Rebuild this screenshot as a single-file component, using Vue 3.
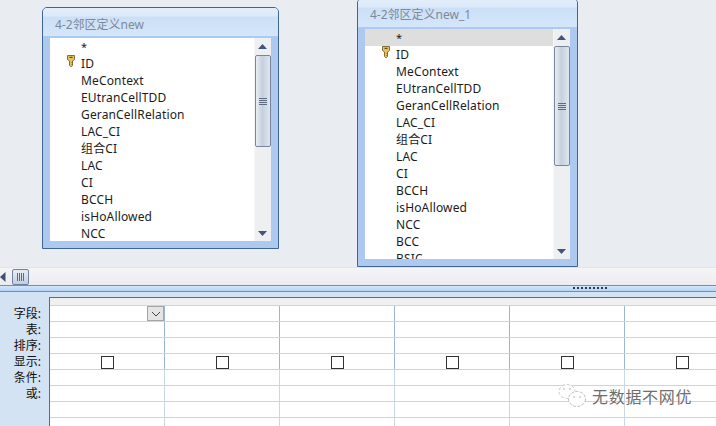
<script setup>
const fields = ['ID', 'MeContext', 'EUtranCellTDD', 'GeranCellRelation', 'LAC_CI', '组合CI', 'LAC', 'CI', 'BCCH', 'isHoAllowed', 'NCC', 'BCC', 'BSIC']
const tables = [
  { key: 'a', title: '4-2邻区定义new', rows: fields.slice(0, 11), selected: false },
  { key: 'b', title: '4-2邻区定义new_1', rows: fields, selected: true }
]
const labels = ['字段:', '表:', '排序:', '显示:', '条件:', '或:', '', '']
const columns = [0, 1, 2, 3, 4, 5]
const gridRows = ['field', 'table', 'sort', 'show', 'cond', 'or', 'blank', 'blank2']
</script>

<template>
  <div class="app">
    <section class="canvas">
      <article v-for="t in tables" :key="t.key" class="win" :class="'win-' + t.key">
        <header class="title">{{ t.title }}</header>
        <div class="body">
          <ul class="list">
            <li class="row star" :class="{ sel: t.selected }">*</li>
            <li v-for="(r, i) in t.rows" :key="r" class="row">
              <svg v-if="i === 0" class="key" width="8" height="12" viewBox="0 0 8 12">
                <path d="M.5.500h7v4l-2 1.500v4.500l-1 1h-1l-1-1v-4.500l-2-1.500z" fill="#e6c258" stroke="#75622a" stroke-width=".9"/>
                <rect x="2.500" y="1.800" width="3" height="1.200" fill="#5d4d1c"/>
                <path d="M4.500 7.500h1.500M4.500 9.500h1.500" stroke="#75622a" stroke-width=".9"/>
              </svg>
              {{ r }}
            </li>
          </ul>
          <div class="vbar">
            <svg class="arrow" width="17" height="16" viewBox="0 0 17 16"><path d="M4 11h9l-4.500-5z" fill="#44557c"/></svg>
            <div class="thumb"><span class="grip"></span></div>
            <div class="track"></div>
            <svg class="arrow" width="17" height="16" viewBox="0 0 17 16"><path d="M4 6h9l-4.500 5z" fill="#44557c"/></svg>
          </div>
        </div>
      </article>
    </section>

    <div class="hbar">
      <svg class="left" width="6" height="10" viewBox="0 0 6 10"><path d="M5.500 0v10l-5.500-5z" fill="#3f5275"/></svg>
      <div class="hthumb"><span class="hgrip"></span></div>
    </div>

    <div class="split"><span class="dots"></span></div>

    <section class="pane">
      <div class="labels">
        <div v-for="(l, i) in labels" :key="i" class="label">{{ l }}</div>
      </div>
      <div class="grid">
        <div class="heads">
          <div v-for="c in columns" :key="c" class="head"></div>
        </div>
        <div v-for="(r, ri) in gridRows" :key="r" class="grow">
          <div v-for="c in columns" :key="c" class="cell" :class="{ faint: ri > 3 }">
            <span v-if="r === 'field' && c === 0" class="combo">
              <svg width="10" height="6" viewBox="0 0 10 6"><path d="M1 1l4 4 4-4" fill="none" stroke="#444" stroke-width="1"/></svg>
            </span>
            <span v-if="r === 'show'" class="check"></span>
          </div>
        </div>
      </div>
      <div class="mark">
        <svg width="30" height="25" viewBox="0 0 30 25">
          <ellipse cx="9" cy="8.500" rx="8" ry="7" fill="#fff" fill-opacity=".85" stroke="#b5b5b5" stroke-width=".7" stroke-dasharray="3 2"/>
          <ellipse cx="19" cy="16" rx="8.500" ry="7.500" fill="#fff" fill-opacity=".95" stroke="#a0a0a0" stroke-width=".7" stroke-dasharray="3 1.500"/>
          <circle cx="6" cy="6" r=".8" fill="#aaa"/><circle cx="12" cy="6" r=".8" fill="#aaa"/>
          <circle cx="16" cy="14" r=".7" fill="#999"/><circle cx="22" cy="14" r=".7" fill="#999"/>
        </svg>
        <span class="mark-text">无数据不网优</span>
      </div>
    </section>
  </div>
</template>

<style scoped>
.app {
  position: relative;
  width: 716px;
  height: 426px;
  overflow: hidden;
  display: flex;
  flex-direction: column;
  font-family: "Noto Sans", "Noto Sans CJK SC", sans-serif;
  color: #1a1a1a;
  background: #e9edf1;
}
.canvas {
  position: relative;
  height: 267px;
  flex: none;
  background: #e9edf1;
  box-sizing: border-box;
  overflow: hidden;
}
.win {
  position: absolute;
  box-sizing: border-box;
  border: 1px solid #3f6593;
  border-radius: 5px 5px 0 0;
  background: #adc9ef;
  display: flex;
  flex-direction: column;
}
.win-a { left: 42px; top: 7px; width: 237px; height: 242px; }
.win-b { left: 357px; top: -2px; width: 221px; height: 269px; }
.title {
  height: 29px;
  flex: none;
  box-sizing: border-box;
  padding: 9px 0 0 12px;
  font-size: 12px;
  line-height: 16px;
  color: #7d8a98;
  border-radius: 4px 4px 0 0;
  border-bottom: 1px solid #a8cdf3;
  background: linear-gradient(#e4eefb 0, #dbe9fa 30%, #cbdff6 31%, #d5e6fa 100%);
}
.win-b .title { padding-top: 8px; }
.body {
  display: flex;
  margin: 1px 7px 7px 7px;
  height: 203px;
  background: #fff;
  overflow: hidden;
}
.win-b .body { height: 232px; }
.list {
  list-style: none;
  margin: 0;
  padding: 0;
  flex: 1;
  min-width: 0;
  overflow: hidden;
}
.row {
  position: relative;
  height: 17px;
  line-height: 17px;
  padding-left: 31px;
  font-size: 12px;
  letter-spacing: .15px;
  white-space: nowrap;
  color: #1c1c1c;
}
.star { font-size: 11px; }
.sel { background: #dedede; }
.key { position: absolute; left: 17px; top: 0; }
.vbar {
  width: 17px;
  flex: none;
  display: flex;
  flex-direction: column;
  background: #eeeff1;
  border-left: 1px solid #f6f6f7;
  box-sizing: border-box;
}
.arrow { flex: none; margin-left: -1px; }
.thumb {
  flex: none;
  height: 92px;
  box-sizing: border-box;
  margin-top: 1px;
  border: 1px solid #77869d;
  border-radius: 2px;
  background: linear-gradient(90deg, #e9eef4 0, #c5d0de 45%, #dfe6ee 100%);
  display: flex;
  align-items: center;
  justify-content: center;
}
.win-b .thumb { height: 120px; }
.grip {
  width: 8px;
  height: 7px;
  background: repeating-linear-gradient(#5f6b7e 0 1px, transparent 1px 2px);
}
.track { flex: 1; }
.hbar {
  height: 18px;
  flex: none;
  display: flex;
  align-items: center;
  box-sizing: border-box;
  border-top: 1px solid #dfe5ea;
  background: linear-gradient(#f5f5f6, #ececee);
}
.hthumb {
  width: 17px;
  height: 16px;
  margin-left: 6px;
  box-sizing: border-box;
  border: 1px solid #6f82a3;
  border-radius: 2px;
  background: linear-gradient(#e8edf3, #c3cedd);
  display: flex;
  align-items: center;
  justify-content: center;
}
.hgrip {
  width: 7px;
  height: 8px;
  background: repeating-linear-gradient(90deg, #5f6b7e 0 1px, transparent 1px 2px);
}
.split {
  height: 7px;
  flex: none;
  box-sizing: border-box;
  border-top: 1px solid #6f8fb8;
  border-bottom: 1px solid #6f8fb8;
  background: linear-gradient(#d3e5fb, #b6d3f7);
  padding-left: 573px;
}
.dots {
  display: block;
  width: 35px;
  height: 2px;
  margin-top: 1px;
  background: repeating-linear-gradient(90deg, #2d3a4d 0 2px, transparent 2px 4px);
}
.pane {
  position: relative;
  flex: 1;
  display: flex;
  box-sizing: border-box;
  padding-top: 5px;
  background: #d3e3f3;
  min-height: 0;
}
.labels {
  width: 49px;
  flex: none;
  padding-top: 9px;
  box-sizing: border-box;
}
.label {
  height: 16px;
  line-height: 16px;
  font-size: 12px;
  text-align: right;
  padding-right: 8px;
  color: #111;
  white-space: nowrap;
}
.grid {
  flex: 1;
  min-width: 0;
  background: #fff;
  border-left: 1px solid #666a70;
  border-top: 1px solid #666a70;
  overflow: hidden;
}
.heads, .grow { display: flex; margin-left: -1px; }
.head {
  width: 115px;
  height: 7px;
  flex: none;
  background: #f0f0f0;
  border-right: 1px solid #9ab6d3;
  margin-right: -1px;
  border-bottom: 1px solid #c9d5e0;
}
.cell {
  position: relative;
  width: 115px;
  height: 15px;
  flex: none;
  margin-right: -1px;
  border-right: 1px solid #9ab6d3;
  border-bottom: 1px solid #c9d5e0;
  display: flex;
  align-items: center;
  justify-content: center;
}
.cell.faint { border-right-color: #c9d7e8; }
.combo {
  position: absolute;
  right: 0;
  top: 0;
  width: 17px;
  height: 15px;
  box-sizing: border-box;
  border: 1px solid #a5a5a5;
  background: #e4e4e4;
  display: flex;
  align-items: center;
  justify-content: center;
}
.check {
  width: 13px;
  height: 13px;
  margin: 1px 0 0 2px;
  box-sizing: border-box;
  border: 1px solid #333;
  background: #fff;
}
.mark {
  position: absolute;
  left: 558px;
  top: 91px;
  display: flex;
  align-items: center;
  gap: 4px;
}
.mark-text {
  font-size: 16px;
  letter-spacing: .7px;
  color: #6e6e6e;
  white-space: nowrap;
  text-shadow: 0 0 1px #fff;
}
</style>
